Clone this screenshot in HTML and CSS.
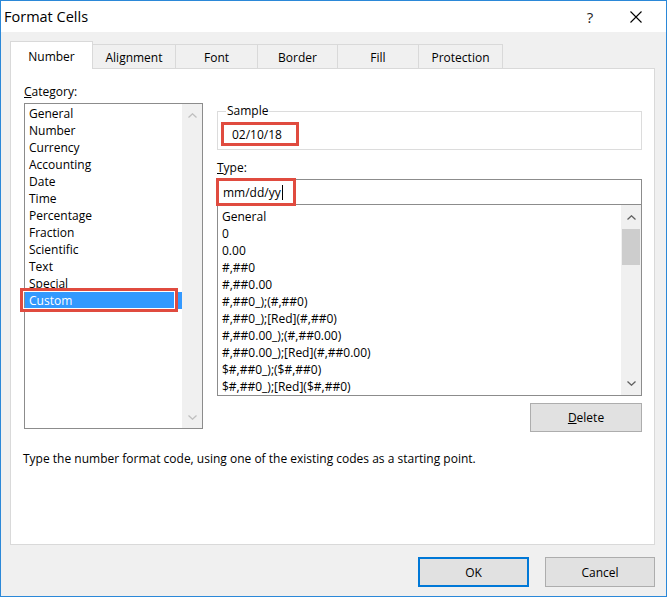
FILE: index.html
```html
<!DOCTYPE html>
<html lang="en">
<head>
<meta charset="utf-8">
<title>Format Cells</title>
<link rel="stylesheet" href="styles.css">
</head>
<body>
<div class="window">
  <div class="titlebar">
    <span class="title">Format Cells</span>
    <span class="cap-btn help">?</span>
    <span class="cap-btn close">
      <svg width="12" height="12" viewBox="0 0 12 12"><path d="M0.5 0.5 L11.5 11.5 M11.5 0.5 L0.5 11.5" stroke="#000" stroke-width="1.1" fill="none"/></svg>
    </span>
  </div>
  <div class="client">
    <div class="tabs">
      <div class="tab active w-number">Number</div>
      <div class="tab w-align">Alignment</div>
      <div class="tab w-font">Font</div>
      <div class="tab w-border">Border</div>
      <div class="tab w-fill">Fill</div>
      <div class="tab w-prot">Protection</div>
    </div>
    <div class="panel">
      <div class="top">
        <div class="cat-col">
          <div class="label"><u>C</u>ategory:</div>
          <div class="listbox cat-list">
            <ul class="items">
              <li>General</li>
              <li>Number</li>
              <li>Currency</li>
              <li>Accounting</li>
              <li>Date</li>
              <li>Time</li>
              <li>Percentage</li>
              <li>Fraction</li>
              <li>Scientific</li>
              <li>Text</li>
              <li>Special</li>
              <li class="selected">Custom</li>
            </ul>
            <div class="vscroll disabled">
              <div class="sbtn"><svg width="9" height="5" viewBox="0 0 9 5"><polyline points="0.5,4.5 4.5,0.8 8.5,4.5" fill="none" stroke="currentColor" stroke-width="1.3"/></svg></div>
              <div class="track"></div>
              <div class="sbtn"><svg width="9" height="5" viewBox="0 0 9 5"><polyline points="0.5,0.5 4.5,4.2 8.5,0.5" fill="none" stroke="currentColor" stroke-width="1.3"/></svg></div>
            </div>
          </div>
        </div>
        <div class="right-col">
          <fieldset class="group">
            <legend>Sample</legend>
            <div class="sample-val">02/10/18</div>
          </fieldset>
          <div class="label type-label"><u>T</u>ype:</div>
          <div class="typebox"><span class="type-mark">mm/dd/yy<span class="caret"></span></span></div>
          <div class="listbox type-list">
            <ul class="items">
              <li>General</li>
              <li>0</li>
              <li>0.00</li>
              <li>#,##0</li>
              <li>#,##0.00</li>
              <li>#,##0_);(#,##0)</li>
              <li>#,##0_);[Red](#,##0)</li>
              <li>#,##0.00_);(#,##0.00)</li>
              <li>#,##0.00_);[Red](#,##0.00)</li>
              <li>$#,##0_);($#,##0)</li>
              <li>$#,##0_);[Red]($#,##0)</li>
            </ul>
            <div class="vscroll">
              <div class="sbtn"><svg width="9" height="5" viewBox="0 0 9 5"><polyline points="0.5,4.5 4.5,0.8 8.5,4.5" fill="none" stroke="currentColor" stroke-width="1.3"/></svg></div>
              <div class="track"><div class="thumb"></div></div>
              <div class="sbtn"><svg width="9" height="5" viewBox="0 0 9 5"><polyline points="0.5,0.5 4.5,4.2 8.5,0.5" fill="none" stroke="currentColor" stroke-width="1.3"/></svg></div>
            </div>
          </div>
          <button class="btn delete"><u>D</u>elete</button>
        </div>
      </div>
      <p class="desc">Type the number format code, using one of the existing codes as a starting point.</p>
    </div>
    <div class="footer">
      <button class="btn ok">OK</button>
      <button class="btn cancel">Cancel</button>
    </div>
  </div>
</div>
</body>
</html>
```

FILE: styles.css
```css
* { box-sizing: border-box; }

body {
  margin: 0;
  font-family: "Open Sans", "Noto Sans", sans-serif;
  font-size: 12px;
  color: #000;
  background: #fff;
}

.window {
  width: 667px;
  height: 597px;
  border: 1px solid #2b88d8;
  background: #f0f0f0;
  display: flex;
  flex-direction: column;
  overflow: hidden;
}

/* title bar */
.titlebar {
  height: 31px;
  flex: none;
  background: #fff;
  display: flex;
  align-items: center;
  padding-right: 7px;
}
.title {
  flex: 1;
  padding-left: 3px;
  font-size: 14.5px;
  line-height: 20px;
}
.cap-btn {
  width: 46px;
  height: 31px;
  display: flex;
  align-items: center;
  justify-content: center;
}
.help {
  font-size: 15px;
  color: #222;
}

/* client area */
.client {
  flex: 1;
  display: flex;
  flex-direction: column;
  padding: 9px 11px 9px 9px;
}

.tabs {
  height: 27px;
  flex: none;
  display: flex;
  align-items: flex-end;
}
.tab {
  height: 24px;
  border: 1px solid #d9d9d9;
  border-bottom: none;
  background: #f0f0f0;
  margin-left: -1px;
  display: flex;
  align-items: center;
  justify-content: center;
  padding-top: 1px;
}
.tab.active {
  height: 28px;
  margin-left: 0;
  margin-bottom: -1px;
  background: #fff;
  position: relative;
  z-index: 1;
  padding-top: 2px;
}
.w-number { width: 83px; }
.w-align { width: 84px; }
.w-font { width: 83px; }
.w-border { width: 81px; }
.w-fill { width: 82px; }
.w-prot { width: 85px; }

.panel {
  height: 477px;
  flex: none;
  background: #fff;
  border: 1px solid #d9d9d9;
  padding: 14px 12px 0 13px;
}

.top {
  display: flex;
  gap: 14px;
}

.label {
  line-height: 17px;
  height: 17px;
}

/* category */
.cat-col {
  width: 179px;
  flex: none;
}
.cat-col .label { margin-bottom: 3px; }

.listbox {
  border: 1px solid #8c8c8c;
  background: #fff;
  display: flex;
}
.cat-list { height: 326px; }

.items {
  list-style: none;
  margin: 0;
  padding: 1px 0 0 0;
  flex: 1;
  min-width: 0;
}
.items li {
  height: 17px;
  line-height: 17px;
  padding-left: 4px;
  white-space: nowrap;
}
.cat-list .items li.selected {
  background: #3399ff;
  color: #fff;
  position: relative;
}
.cat-list .items li.selected::after {
  content: "";
  position: absolute;
  left: -5px;
  right: 4px;
  top: -4px;
  bottom: -3px;
  border: 3px solid #e04b3f;
  box-shadow: inset 0 0 0 1px #fff;
}

.vscroll {
  width: 20px;
  flex: none;
  background: #f0f0f0;
  display: flex;
  flex-direction: column;
  color: #606060;
}
.vscroll.disabled { color: #bfbfbf; }
.cat-list .sbtn { height: 22px; }
.sbtn {
  height: 24px;
  flex: none;
  display: flex;
  align-items: center;
  justify-content: center;
}
.track {
  flex: 1;
  padding: 0 1px;
}
.thumb {
  height: 36px;
  background: #cdcdcd;
}

/* right column */
.right-col {
  flex: 1;
  display: flex;
  flex-direction: column;
  min-width: 0;
}

.group {
  margin: 21px 0 0 0;
  padding: 4px 0 3px 3px;
  border: 1px solid #dcdcdc;
  min-width: 0;
}
.group legend {
  margin-left: 5px;
  padding: 0 1px;
  line-height: 14px;
}
.sample-val {
  width: 78px;
  height: 24px;
  border: 3px solid #e04b3f;
  padding: 1px 0 0 8px;
  line-height: 17px;
}

.type-label { margin-top: 9px; }

.typebox {
  margin-top: 3px;
  height: 26px;
  border: 1px solid #8c8c8c;
  background: #fff;
  display: flex;
  position: relative;
  z-index: 1;
}
.type-mark {
  margin: -2px 0 -2px -2px;
  width: 80px;
  height: 28px;
  border: 3px solid #e04b3f;
  padding-left: 4px;
  display: flex;
  align-items: center;
}
.caret {
  width: 1px;
  height: 15px;
  background: #000;
  margin-left: 1px;
}

.type-list {
  margin-top: -1px;
  height: 192px;
  overflow: hidden;
}
.type-list .items { padding-top: 3px; }

.btn {
  font-family: inherit;
  font-size: 12px;
  color: #000;
  background: #e1e1e1;
  border: 1px solid #adadad;
  padding: 0;
  margin: 0;
}
.delete {
  align-self: flex-end;
  margin-top: 7px;
  width: 112px;
  height: 29px;
}

.desc {
  margin: 18px 0 0 -1px;
  line-height: 17px;
}

/* footer */
.footer {
  margin-top: 12px;
  display: flex;
  justify-content: flex-end;
  gap: 16px;
}
.footer .btn { height: 30px; }
.ok {
  width: 111px;
  border: 2px solid #0078d7;
}
.cancel { width: 110px; }
```
